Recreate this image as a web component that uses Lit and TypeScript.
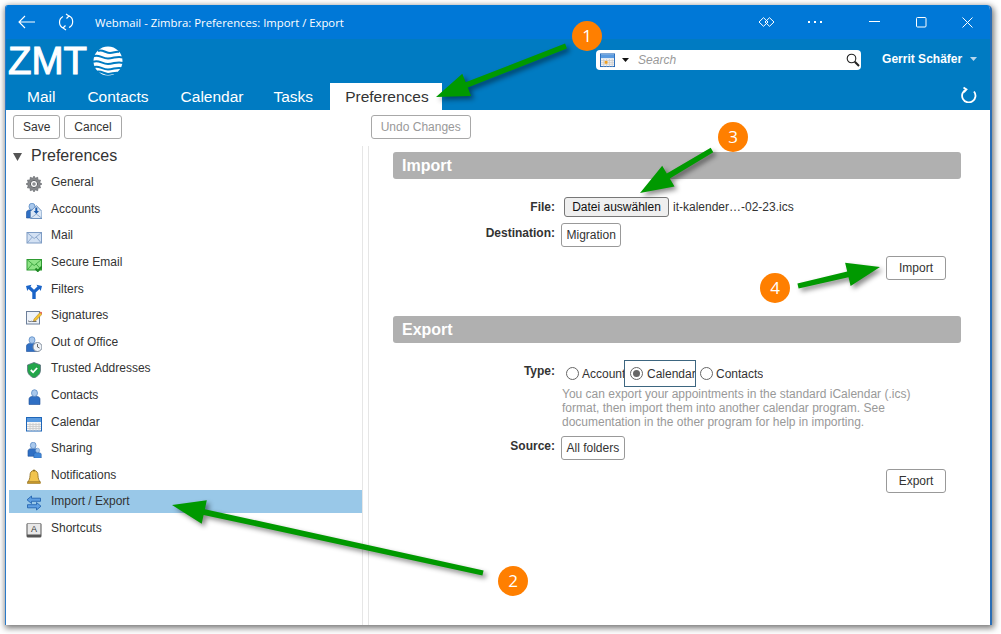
import { LitElement, html, css, svg } from "lit";
import { customElement } from "lit/decorators.js";

const person = (x: number, y: number, s = 1, fill = "#2f6fc4") => svg`
  <g transform="translate(${x} ${y}) scale(${s})">
    <path d="M.5 15V9.500C.5 8 2 7 3.500 7h5c1.500 0 3 1 3 2.500V15z" fill="${fill}" stroke="#1c4f98" stroke-width=".6"/>
    <ellipse cx="6" cy="3.600" rx="3" ry="3.400" fill="#a9c8ec" stroke="#4b7fbe" stroke-width=".7"/>
  </g>`;

const envelope = (fill: string, stroke: string) => svg`
  <rect x="1" y="3.500" width="14.500" height="10.500" fill="${fill}" stroke="${stroke}"/>
  <path d="M1.300 3.800 8.200 9.500l7-5.700M1.300 13.800 6.300 8M15.200 13.800 10.200 8" fill="none" stroke="${stroke}" stroke-width=".8"/>`;

const calendarIcon = svg`
  <rect x=".5" y="1.500" width="15" height="13.500" fill="#f4f4f4" stroke="#1f66b8"/>
  <rect x="1" y="2" width="14" height="4" fill="#5b9be0"/>
  <path d="M1 8.500h14M1 10.500h14M1 12.500h14M4 7v8M7 7v8M10 7v8M13 7v8" stroke="#c9c9c9" stroke-width=".8"/>`;

const ICONS: Record<string, unknown> = {
  General: svg`
    <path d="M8 0l1.300 2.200 2.400-.9.300 2.600 2.600.3-.9 2.400L16 8l-2.300 1.400.9 2.400-2.600.3-.3 2.600-2.400-.9L8 16l-1.300-2.200-2.400.9-.3-2.600-2.600-.3.9-2.400L0 8l2.300-1.400-.9-2.400 2.600-.3.300-2.600 2.400.9z" fill="#85878a" stroke="#5d6064" stroke-width=".6"/>
    <circle cx="8" cy="8" r="3.600" fill="#fff" stroke="#5d6064"/><circle cx="8" cy="8" r="1.800" fill="#8a8c90"/>`,
  Accounts: svg`
    <g>${person(0, 0, 1)}</g>
    <path d="M4.500 8.500l5.800-6 5.700 6v7h-11.500z" fill="#dbe7f5" stroke="#6d92bf"/>
    <path d="M5 15l5.300-4 5.300 4" fill="none" stroke="#6d92bf" stroke-width=".7"/>
    <path d="M9.300 4.500h2v3.500H13l-2.700 3-2.700-3h1.700z" fill="#1d5cae"/>`,
  Mail: envelope("#d3e1f3", "#7e9cc4"),
  "Secure Email": svg`${envelope("#8fe487", "#2f9b32")}
    <path d="M9.500 12.500l2.300 2.500L16 10.500" fill="none" stroke="#1f8a24" stroke-width="2"/>`,
  Filters: svg`
    <path d="M0 3l5.500-1.300-1 1.800L8 6.800l3.500-3.300-1-1.800L16 3l-1.300 5-1.200-2L9.700 9.500V16H6.300V9.500L2.500 6l-1.200 2z" fill="#1a64c8"/>`,
  Signatures: svg`
    <rect x=".5" y="2.500" width="13" height="12.500" fill="#eef3fa" stroke="#6d7f9a"/>
    <path d="M2 12.500c1-1.500 1.500 1 2.500 0s1 .5 2 0h4" fill="none" stroke="#333" stroke-width=".7"/>
    <path d="M8 10l6-6.500 2 1.800L10 11.500l-2.500.6z" fill="#f4c430" stroke="#a9791c" stroke-width=".5"/>
    <path d="M14 3.500l2 1.800 .8-1-2-1.800z" fill="#e2574c"/>`,
  "Out of Office": svg`${person(0, 0.5, 1)}
    <circle cx="11.500" cy="11" r="4.500" fill="#eef2f7" stroke="#7d8a99"/>
    <path d="M11.500 8v3l2 1" fill="none" stroke="#444" stroke-width=".8"/>`,
  "Trusted Addresses": svg`
    <path d="M8 .500l6.500 2.500v5c0 4-3 6.500-6.500 8C4.500 14.500 1.500 12 1.500 8V3z" fill="#22a54a" stroke="#607080" stroke-width=".8"/>
    <path d="M4.800 8l2.300 2.300 4-4.300" fill="none" stroke="#fff" stroke-width="1.800"/>`,
  Contacts: person(2.500, 0.5),
  Calendar: calendarIcon,
  Sharing: svg`${person(1.500, 0, 0.95)}${person(7.500, 6, 0.68, "#3f86d8")}`,
  Notifications: svg`
    <path d="M8 1.500c-3 0-4 2.500-4 5 0 3-1 5-2.200 6.500h12.400C13 11.500 12 9.500 12 6.500c0-2.500-1-5-4-5z" fill="#f2c44e" stroke="#8a6a1e" stroke-width=".8"/>
    <rect x="1.500" y="13" width="13" height="1.600" fill="#d9a62e" stroke="#8a6a1e" stroke-width=".5"/>
    <circle cx="8" cy="1.500" r="1" fill="#8a6a1e"/>`,
  "Import / Export": svg`
    <path d="M5.500 1L1 4.800 5.500 8.500V6.300h9V3.200h-9z" fill="#5f9fe2" stroke="#1a5cab" stroke-width=".8"/>
    <path d="M10.500 7.500L15 11.200 10.500 15v-2.200h-9V9.700h9z" fill="#5f9fe2" stroke="#1a5cab" stroke-width=".8"/>`,
  Shortcuts: svg`
    <rect x=".5" y="1" width="15" height="14.500" rx="1.500" fill="#555"/>
    <rect x="1.500" y="1.500" width="13" height="11" fill="#e8e8e8"/>
    <text x="8" y="10" font-size="9" font-family="Liberation Sans" text-anchor="middle" fill="#333">A</text>`,
};

const NAV = Object.keys(ICONS);

function arrow(x1: number, y1: number, x2: number, y2: number) {
  const L = Math.hypot(x2 - x1, y2 - y1);
  const ux = (x2 - x1) / L, uy = (y2 - y1) / L;
  const nx = -uy, ny = ux;
  const hl = 33, hw = 12, tail = 2.900, tail0 = 2.600;
  const bx = x2 - ux * hl, by = y2 - uy * hl;
  const p = (x: number, y: number) => `${x.toFixed(1)},${y.toFixed(1)}`;
  return [
    p(x1 + nx * tail0, y1 + ny * tail0),
    p(bx + nx * tail, by + ny * tail),
    p(bx + nx * hw, by + ny * hw),
    p(x2, y2),
    p(bx - nx * hw, by - ny * hw),
    p(bx - nx * tail, by - ny * tail),
    p(x1 - nx * tail0, y1 - ny * tail0),
  ].join(" ");
}

const CALLOUTS = [
  { n: "1", cx: 587, cy: 36, a: [566, 46, 436, 97] },
  { n: "2", cx: 513, cy: 581, a: [483, 573, 172, 505] },
  { n: "3", cx: 733, cy: 137, a: [712, 150, 640, 193] },
  { n: "4", cx: 775, cy: 288, a: [798, 286, 880, 267] },
];

@customElement("app-root")
export class AppRoot extends LitElement {
  static styles = css`
    :host {
      display: block;
      position: relative;
      width: 1001px;
      height: 634px;
      box-sizing: border-box;
      padding: 5px 9px 9px 5px;
      background: #fff;
      font-family: "Liberation Sans", Arial, sans-serif;
      font-size: 12px;
      color: #333;
      overflow: hidden;
    }
    .window {
      height: 620px;
      display: flex;
      flex-direction: column;
      background: #fff;
      border-right: 2px solid #2a6db5;
      border-left: 1px solid #2a7ac8;
      border-radius: 3px 5px 0 0;
      box-shadow: 1px 2px 6px 1px rgba(0, 0, 0, 0.55);
      overflow: hidden;
    }
    .titlebar {
      height: 34px;
      flex: none;
      background: #0078d7;
      color: #fff;
      display: flex;
      align-items: center;
    }
    .titlebar svg { display: block; flex: none; }
    .back { margin-left: 12px; }
    .sync { margin-left: 23px; }
    .title {
      margin-left: 21px;
      font-family: "Open Sans", sans-serif;
      font-size: 11.320px;
      flex: 1;
      white-space: nowrap;
    }
    .tctl { display: flex; align-items: center; margin-right: 17px; }
    .tctl .dots { margin-left: 33px; }
    .tctl .min { margin-left: 47px; }
    .tctl .max { margin-left: 36px; }
    .tctl .close { margin-left: 35px; }
    .header {
      height: 71px;
      flex: none;
      background: #007bc2;
      color: #fff;
      display: flex;
      flex-direction: column;
      justify-content: space-between;
    }
    .brand {
      display: flex;
      align-items: flex-start;
      height: 44px;
    }
    .logo {
      display: flex;
      align-items: center;
      gap: 6px;
      margin: 5px 0 0 2px;
      font-size: 38.500px;
      line-height: 34px;
      -webkit-text-stroke: 1px #fff;
    }
    .search {
      margin: 11px 0 0 473px;
      width: 265px;
      height: 20px;
      background: #fff;
      border-radius: 4px;
      display: flex;
      align-items: center;
      box-sizing: border-box;
      padding: 0 1px 0 4px;
      color: #999;
      font-style: italic;
    }
    .search .cal { margin-right: 7px; }
    .search .drop { margin-right: 9px; }
    .search .ph { flex: 1; }
    .user {
      margin: 12px 0 0 21px;
      display: flex;
      align-items: center;
      font-weight: bold;
      gap: 8px;
      line-height: 16px;
    }
    .tabs {
      display: flex;
      height: 27px;
      align-items: stretch;
      padding-left: 5px;
      font-size: 15.500px;
    }
    .tab { padding: 5px 16px 0; }
    .tab.cal { padding-right: 14px; }
    .tab.on { background: #fff; color: #333; padding: 5px 13px 0 15px; margin-left: 1px; }
    .tabs .refresh { margin: 3px 13px 0 auto; }
    .toolbar {
      height: 36px;
      flex: none;
      display: flex;
      align-items: flex-start;
      padding: 5px 0 0 7px;
      box-sizing: border-box;
    }
    .btn {
      box-sizing: border-box;
      height: 24px;
      line-height: 22px;
      padding: 0 9px;
      border: 1px solid #a8a8a8;
      border-radius: 3px;
      background: #fff;
      color: #333;
      white-space: nowrap;
      text-align: center;
    }
    .toolbar .btn + .btn { margin-left: 4px; }
    .toolbar .undo { margin-left: 249px !important; width: 100px; padding: 0; color: #999; }
    .main { flex: 1; display: flex; min-height: 0; }
    .side {
      width: 357px;
      flex: none;
      box-sizing: border-box;
      padding-left: 3px;
      border-right: 1px solid #e6e6e6;
    }
    .treehead {
      display: flex;
      align-items: center;
      height: 20px;
      font-size: 16px;
      margin-left: 4px;
      gap: 9px;
    }
    .rows { margin-top: 5.200px; display: flex; flex-direction: column; gap: 3.600px; }
    .row {
      height: 23px;
      display: flex;
      align-items: center;
      padding-left: 17px;
      gap: 9px;
    }
    .row span { margin-top: -1px; }
    .row.sel { background: #99c8e8; }
    .row svg { flex: none; margin-top: 3px; }
    .pane {
      flex: 1;
      margin-left: 5px;
      border-left: 1px solid #e6e6e6;
      padding: 6px 29px 0 24px;
    }
    .sec {
      height: 27px;
      background: #b0b0b0;
      border-radius: 3px;
      color: #fff;
      font-weight: bold;
      font-size: 16px;
      line-height: 27px;
      padding-left: 9px;
    }
    .form {
      display: grid;
      grid-template-columns: 162px 1fr;
      align-items: start;
    }
    .lab { text-align: right; font-weight: bold; }
    .file { margin-top: 18px; }
    .file .lab { margin-top: 3px; }
    .filev { display: flex; align-items: center; margin-left: 9px; gap: 4px; }
    .fbtn {
      box-sizing: border-box;
      height: 20px;
      width: 105px;
      border: 1px solid #777;
      border-radius: 3px;
      background: #efefef;
      line-height: 18px;
      text-align: center;
      color: #111;
    }
    .dest { margin-top: 6px; }
    .dest .lab { margin-top: 3px; }
    .pick { margin-left: 6px; justify-self: start; padding: 0 4.500px; border-color: #999; }
    .act { display: flex; justify-content: flex-end; margin-right: 15px; }
    .act .btn { width: 60px; padding: 0; border-color: #999; }
    .a1 { margin-top: 9px; }
    .exp { margin-top: 36px; }
    .type { margin-top: 17px; }
    .type .lab { margin-top: 4px; }
    .radios { display: flex; margin-left: 11px; height: 27px; white-space: nowrap; }
    .opt { display: flex; align-items: center; gap: 3px; overflow: hidden; box-sizing: border-box; }
    .opt.a { width: 58px; }
    .opt.c {
      width: 72px;
      border: 1px solid #3d6680;
      padding-left: 5px;
      gap: 4px;
    }
    .opt.d { margin-left: 4px; }
    .radio {
      width: 13px;
      height: 13px;
      flex: none;
      box-sizing: border-box;
      border: 1px solid #666;
      border-radius: 50%;
      background: #fff;
      display: flex;
      align-items: center;
      justify-content: center;
    }
    .radio.on::after {
      content: "";
      width: 7px;
      height: 7px;
      border-radius: 50%;
      background: #666;
    }
    .help {
      grid-column: 2;
      margin: 0 0 0 7px;
      width: 360px;
      color: #999;
      line-height: 14px;
    }
    .src { margin-top: 7px; }
    .src .lab { margin-top: 3px; }
    .a2 { margin-top: 9px; }
    .callouts { position: absolute; left: 0; top: 0; pointer-events: none; }
    .callouts polygon { fill: #009900; filter: drop-shadow(3px 3px 2.500px rgba(0, 0, 0, 0.45)); }
    .callouts circle { fill: #ff7f00; }
    .callouts text { fill: #fff; font: 17px "Open Sans", sans-serif; text-anchor: middle; }
  `;

  render() {
    return html`
      <div class="window">
        <div class="titlebar">
          <svg class="back" width="17" height="14" viewBox="0 0 17 14" fill="none" stroke="#fff" stroke-width="1.100"><path d="M17 7H1M7 1 1 7l6 6"/></svg>
          <svg class="sync" width="16" height="18" viewBox="0 0 16 18" fill="none" stroke="#fff" stroke-width="1.200"><path d="M5 3.500A6.500 6.500 0 0 0 5 15M11 2.800A6.500 6.500 0 0 1 11 14.500M8 1 11 3 8.500 5.500M8 17 5 15 7.500 12.500"/></svg>
          <div class="title">Webmail - Zimbra: Preferences: Import / Export</div>
          <div class="tctl">
            <svg width="17" height="10" viewBox="0 0 17 10" fill="none" stroke="#fff" stroke-linejoin="round"><path d="M5.500.700 10 5 5.500 9.300 1 5zM11.500.700 16 5l-4.500 4.300L7 5z"/></svg>
            <svg class="dots" width="14" height="4" viewBox="0 0 14 4" fill="#fff"><rect x="0" y="1" width="2" height="2"/><rect x="6" y="1" width="2" height="2"/><rect x="12" y="1" width="2" height="2"/></svg>
            <svg class="min" width="11" height="2" viewBox="0 0 11 2" fill="#fff"><rect width="11" height="1"/></svg>
            <svg class="max" width="11" height="11" viewBox="0 0 11 11" fill="none" stroke="#fff"><rect x=".5" y=".5" width="9.500" height="9.500" rx="1"/></svg>
            <svg class="close" width="11" height="11" viewBox="0 0 11 11" fill="none" stroke="#fff"><path d="M.5.500l10 10M10.500.500l-10 10"/></svg>
          </div>
        </div>
        <div class="header">
          <div class="brand">
            <div class="logo">
              <span>ZMT</span>
              <svg width="30" height="30" viewBox="0 0 30 30">
                <circle cx="15" cy="15" r="14.500" fill="#fff"/>
                <g fill="none" stroke="#007bc2" stroke-width="2">
                  <path d="M5 5c4-2 8 2 12 2s6-2 9-1"/>
                  <path d="M0 10.500c5-3 9 2 15 2s9-3 15-1"/>
                  <path d="M0 16c5-3 9 2 15 2s9-3 15-1"/>
                  <path d="M0 21.500c5-3 9 2 15 2s9-3 15-1"/>
                  <path d="M3 26c5-2 8 2 12 2s7-2 11-1"/>
                </g>
              </svg>
            </div>
            <div class="search">
              <svg class="cal" width="15" height="16" viewBox="0 0 16 16">${calendarIcon}<rect x="5" y="9" width="3" height="3" fill="#f0a020"/></svg>
              <svg class="drop" width="7" height="4" viewBox="0 0 7 4"><path d="M0 0h7L3.500 4z" fill="#111"/></svg>
              <span class="ph">Search</span>
              <svg width="14" height="14" viewBox="0 0 14 14" fill="none" stroke="#222"><circle cx="5.500" cy="5.500" r="4.300" stroke-width="1.100"/><path d="M8.800 8.800 13 13" stroke-width="2"/></svg>
            </div>
            <div class="user">
              <span>Gerrit Schäfer</span>
              <svg width="7" height="4" viewBox="0 0 7 4"><path d="M0 0h7L3.500 4z" fill="#b8d8ee"/></svg>
            </div>
          </div>
          <div class="tabs">
            <div class="tab">Mail</div>
            <div class="tab">Contacts</div>
            <div class="tab cal">Calendar</div>
            <div class="tab">Tasks</div>
            <div class="tab on">Preferences</div>
            <svg class="refresh" width="16" height="17" viewBox="0 0 16 17" fill="none" stroke="#fff" stroke-width="1.800"><path d="M5.300 3.500A6.700 6.700 0 1 0 13 5.500M2.500 1.500l3 2L3 6.200"/></svg>
          </div>
        </div>
        <div class="toolbar">
          <div class="btn">Save</div>
          <div class="btn">Cancel</div>
          <div class="btn undo">Undo Changes</div>
        </div>
        <div class="main">
          <div class="side">
            <div class="treehead">
              <svg width="9" height="9" viewBox="0 0 9 9"><path d="M0 1h9L4.500 9z" fill="#555"/></svg>
              <span>Preferences</span>
            </div>
            <div class="rows">
              ${NAV.map(
                (n) => html`<div class="row ${n === "Import / Export" ? "sel" : ""}">
                  <svg width="16" height="16" viewBox="0 0 16 16">${ICONS[n]}</svg>
                  <span>${n}</span>
                </div>`
              )}
            </div>
          </div>
          <div class="pane">
            <div class="sec">Import</div>
            <div class="form file">
              <div class="lab">File:</div>
              <div class="filev"><div class="fbtn">Datei auswählen</div><span>it-kalender…-02-23.ics</span></div>
            </div>
            <div class="form dest">
              <div class="lab">Destination:</div>
              <div class="btn pick">Migration</div>
            </div>
            <div class="act a1"><div class="btn">Import</div></div>
            <div class="sec exp">Export</div>
            <div class="form type">
              <div class="lab">Type:</div>
              <div class="radios">
                <label class="opt a"><span class="radio"></span>Account</label>
                <label class="opt c"><span class="radio on"></span>Calendar</label>
                <label class="opt d"><span class="radio"></span>Contacts</label>
              </div>
              <p class="help">You can export your appointments in the standard iCalendar (.ics) format, then import them into another calendar program. See documentation in the other program for help in importing.</p>
            </div>
            <div class="form src">
              <div class="lab">Source:</div>
              <div class="btn pick">All folders</div>
            </div>
            <div class="act a2"><div class="btn">Export</div></div>
          </div>
        </div>
      </div>
      <svg class="callouts" width="1001" height="634" viewBox="0 0 1001 634">
        ${CALLOUTS.map(
          (c) => svg`
            <polygon points="${arrow(c.a[0], c.a[1], c.a[2], c.a[3])}"/>
            <circle cx="${c.cx}" cy="${c.cy}" r="15"/>
            <text x="${c.cx}" y="${c.cy + 6}">${c.n}</text>`
        )}
      </svg>
    `;
  }
}
